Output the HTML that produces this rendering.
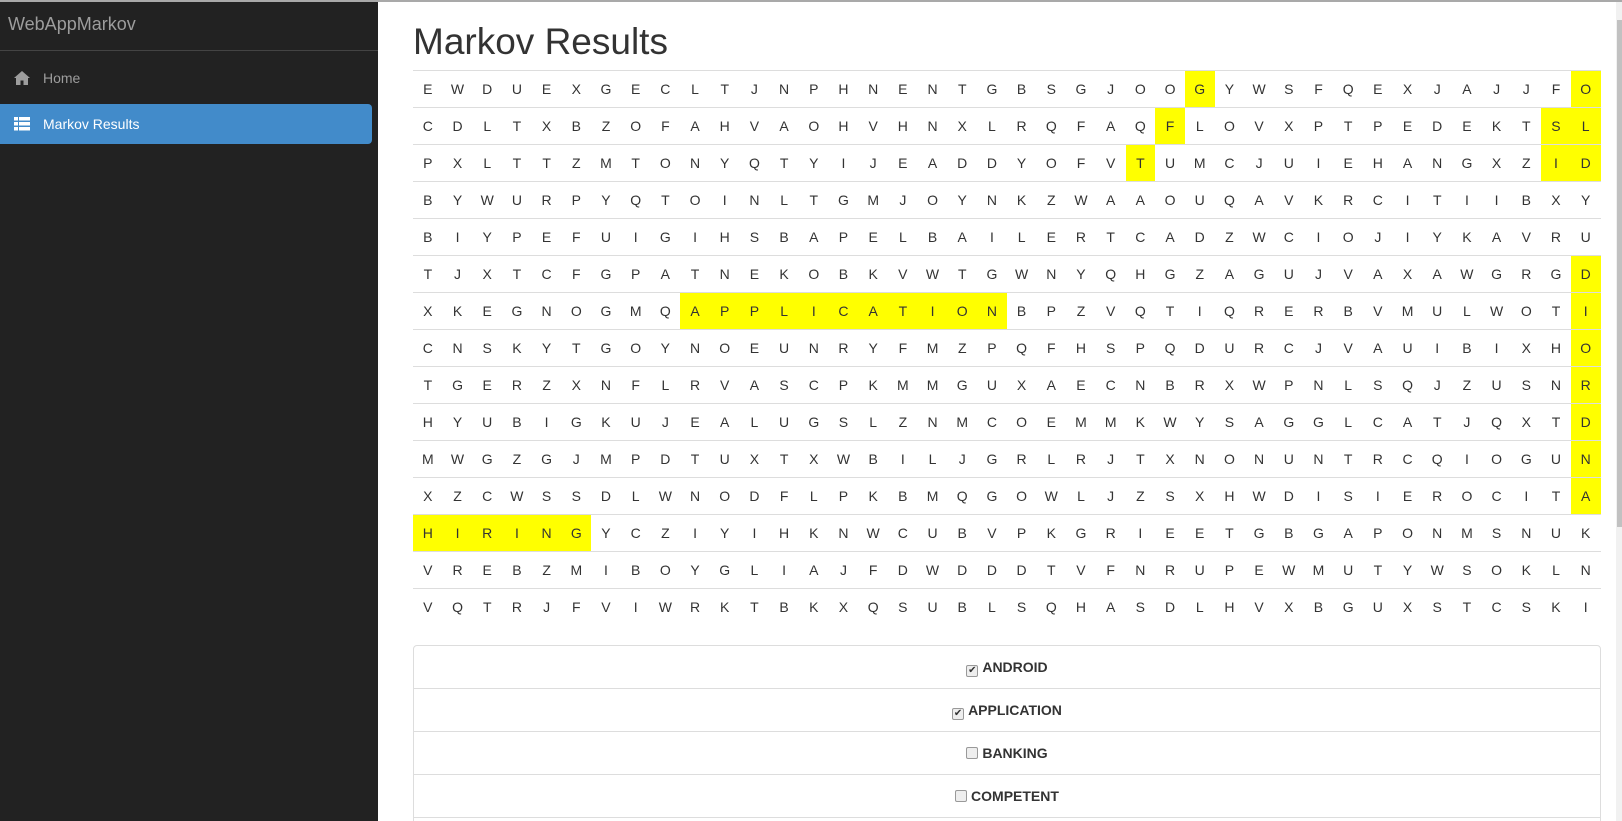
<!DOCTYPE html>
<html><head><meta charset="utf-8">
<style>
*{box-sizing:border-box;margin:0;padding:0}
html,body{width:1622px;height:821px;overflow:hidden;background:#fff}
body{font-family:"Liberation Sans",Arial,sans-serif;color:#333;position:relative}
.topline{position:fixed;left:0;top:0;width:1622px;height:2px;background:#a9a9a9;z-index:5}
.side{position:fixed;left:0;top:0;bottom:0;width:378px;height:821px;background:#222}
.brand{position:absolute;left:8px;top:14px;font-size:18px;color:#9d9d9d}
.div{position:absolute;left:0;top:50px;width:378px;height:1px;background:#444}
.nav{position:absolute;left:0;width:372px;height:40px;font-size:14px;line-height:40px;padding-left:43px}
.home{top:58px;color:#9d9d9d}
.act{top:104px;background:#428bca;color:#fff;border-radius:0 4px 4px 0}
.ico{position:absolute;left:14px;top:13px}
h1{position:absolute;left:413px;top:20px;font-size:37px;font-weight:normal;color:#333;line-height:44px}
#grid{position:absolute;left:413px;top:70px;width:1188px}
.row{display:flex;height:37px;border-top:1px solid #ddd}
.c{width:29.7px;text-align:center;font-size:14px;line-height:36px;color:#333}
.y{background:#ff0}
.panel{position:absolute;left:413px;top:645px;width:1188px;height:200px;border:1px solid #ddd;border-radius:4px}
.pr{height:43px;border-bottom:1px solid #ddd;text-align:center;font-size:14px;font-weight:bold;line-height:42px}
.cb{display:inline-block;width:12px;height:12px;border:1px solid #999;border-radius:2px;background:#eee;vertical-align:-1px;margin-right:4px;font-size:10px;line-height:10px;font-weight:normal;text-align:center;color:#333}
.track{position:fixed;left:1616px;top:2px;width:6px;height:819px;background:#f1f1f1}
.thumb{position:fixed;left:1617px;top:20px;width:5px;height:507px;background:#c1c1c1}
</style></head><body>
<div class="topline"></div>
<div class="side">
<div class="brand">WebAppMarkov</div>
<div class="div"></div>
<div class="nav home"><svg class="ico" width="16" height="14" viewBox="0 0 16 14"><path d="M8 0L0 7h2v7h4.5V9.5h3V14H14V7h2z" fill="#9d9d9d"/></svg>Home</div>
<div class="nav act"><svg class="ico" width="16" height="14" viewBox="0 0 16 14" fill="#fff"><rect x="0" y="0" width="4" height="3.5"/><rect x="5" y="0" width="11" height="3.5"/><rect x="0" y="5" width="4" height="3.5"/><rect x="5" y="5" width="11" height="3.5"/><rect x="0" y="10" width="4" height="3.5"/><rect x="5" y="10" width="11" height="3.5"/></svg>Markov Results</div>
</div>
<h1>Markov Results</h1>
<div id="grid"></div>
<div class="panel">
<div class="pr"><span class="cb">✔</span>ANDROID</div>
<div class="pr"><span class="cb">✔</span>APPLICATION</div>
<div class="pr"><span class="cb"></span>BANKING</div>
<div class="pr"><span class="cb"></span>COMPETENT</div>
</div>
<div class="track"></div><div class="thumb"></div>
<script>
var rows=["EWDUEXGECLTJNPHNENTGBSGJOOGYWSFQEXJAJJFO","CDLTXBZOFAHVAOHVHNXLRQFAQFLOVXPTPEDEKTSL","PXLTTZMTONYQTYIJEADDYOFVTUMCJUIEHANGXZID","BYWURPYQTOINLTGMJOYNKZWAAOUQAVKRCITIIBXY","BIYPEFUIGIHSBAPELBAILERTCADZWCIOJIYKAVRU","TJXTCFGPATNEKOBKVWTGWNYQHGZAGUJVAXAWGRGD","XKEGNOGMQAPPLICATIONBPZVQTIQRERBVMULWOTI","CNSKYTGOYNOEUNRYFMZPQFHSPQDURCJVAUIBIXHO","TGERZXNFLRVASCPKMMGUXAECNBRXWPNLSQJZUSNR","HYUBIGKUJEALUGSLZNMCOEMMKWYSAGGLCATJQXTD","MWGZGJMPDTUXTXWBILJGRLRJTXNONUNTRCQIOGUN","XZCWSSDLWNODFLPKBMQGOWLJZSXHWDISIEROCITA","HIRINGYCZIYIHKNWCUBVPKGRIEETGBGAPONMSNUK","VREBZMIBOYGLIAJFDWDDDTVFNRUPEWMUTYWSOKLN","VQTRJFVIWRKTBKXQSUBLSQHASDLHVXBGUXSTCSKI"];
var hl={"0,26":1,"0,39":1,"1,25":1,"1,38":1,"1,39":1,"2,24":1,"2,38":1,"2,39":1,"5,39":1,"6,39":1,"7,39":1,"8,39":1,"9,39":1,"10,39":1,"11,39":1};
for(var i=9;i<20;i++)hl["6,"+i]=1;for(var i=0;i<6;i++)hl["12,"+i]=1;
var h="";rows.forEach(function(r,ri){h+='<div class="row">';for(var j=0;j<r.length;j++)h+='<div class="c'+(hl[ri+","+j]?' y':'')+'">'+r[j]+'</div>';h+='</div>';});
document.getElementById("grid").innerHTML=h;
</script>
</body></html>
